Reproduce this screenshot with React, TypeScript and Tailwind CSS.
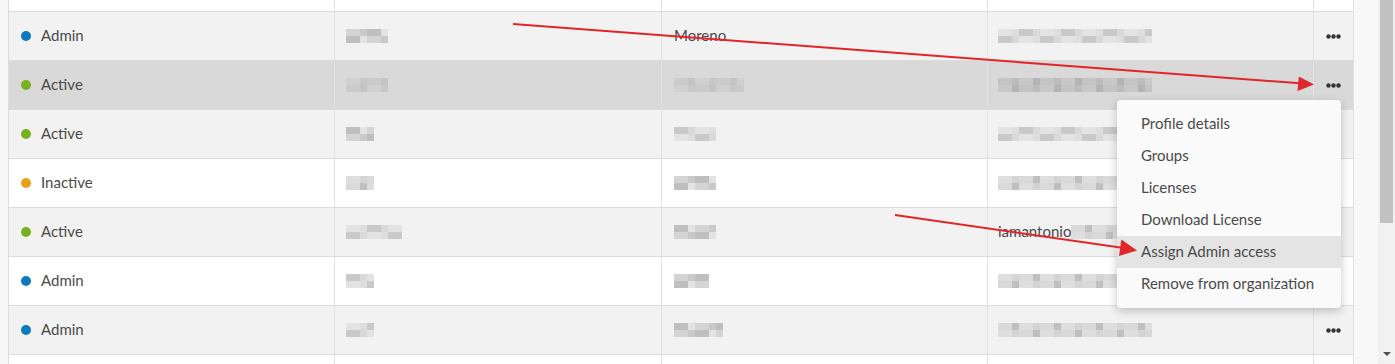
import React from "react";

type Cell = { kind: "text"; text: string } | { kind: "blur"; w: number; seed: number } | { kind: "mixed"; text: string; w: number; seed: number };

type Row = {
  status: "Admin" | "Active" | "Inactive";
  first: Cell;
  last: Cell;
  email: Cell;
  bg: string;
  hover?: boolean;
};

const SHADES = ["bg-[#c9c9c9]", "bg-[#d4d4d4]", "bg-[#dedede]", "bg-[#e3e3e3]", "bg-[#bfbfbf]", "bg-[#d9d9d9]"];
const DARK_SHADES = ["bg-[#bcbcbc]", "bg-[#c4c4c4]", "bg-[#cbcbcb]", "bg-[#b4b4b4]", "bg-[#c8c8c8]", "bg-[#d0d0d0]"];

const DOT: Record<Row["status"], string> = {
  Admin: "bg-[#0b7bbd]",
  Active: "bg-[#7aaf1f]",
  Inactive: "bg-[#e6a117]",
};

const rows: Row[] = [
  { status: "Admin", bg: "bg-[#f2f2f2]", first: { kind: "blur", w: 43, seed: 1 }, last: { kind: "text", text: "Moreno" }, email: { kind: "blur", w: 152, seed: 3 } },
  { status: "Active", bg: "bg-[#d9d9d9]", hover: true, first: { kind: "blur", w: 43, seed: 5 }, last: { kind: "blur", w: 70, seed: 2 }, email: { kind: "blur", w: 152, seed: 7 } },
  { status: "Active", bg: "bg-[#f2f2f2]", first: { kind: "blur", w: 28, seed: 4 }, last: { kind: "blur", w: 42, seed: 6 }, email: { kind: "blur", w: 140, seed: 9 } },
  { status: "Inactive", bg: "bg-white", first: { kind: "blur", w: 28, seed: 8 }, last: { kind: "blur", w: 42, seed: 1 }, email: { kind: "blur", w: 140, seed: 2 } },
  { status: "Active", bg: "bg-[#f2f2f2]", first: { kind: "blur", w: 56, seed: 3 }, last: { kind: "blur", w: 42, seed: 4 }, email: { kind: "mixed", text: "iamantonio", w: 60, seed: 5 } },
  { status: "Admin", bg: "bg-white", first: { kind: "blur", w: 28, seed: 6 }, last: { kind: "blur", w: 35, seed: 7 }, email: { kind: "blur", w: 140, seed: 8 } },
  { status: "Admin", bg: "bg-[#f2f2f2]", first: { kind: "blur", w: 28, seed: 9 }, last: { kind: "blur", w: 49, seed: 10 }, email: { kind: "blur", w: 155, seed: 11 } },
];

function Blur({ w, seed, dark }: { w: number; seed: number; dark?: boolean }) {
  const cols = Math.max(1, Math.round(w / 7));
  const shades = dark ? DARK_SHADES : SHADES;
  return (
    <div className="flex flex-col">
      {[0, 1].map((r) => (
        <div key={r} className="flex">
          {Array.from({ length: cols }).map((_, c) => (
            <div key={c} className={`h-[7px] w-[7px] ${shades[(c * 5 + r * 3 + seed * 7 + ((c * c) % 3)) % shades.length]}`} />
          ))}
        </div>
      ))}
    </div>
  );
}

function CellView({ cell, dark }: { cell: Cell; dark?: boolean }) {
  if (cell.kind === "text") return <span className="pb-[2px]">{cell.text}</span>;
  if (cell.kind === "blur") return <Blur w={cell.w} seed={cell.seed} dark={dark} />;
  return (
    <div className="flex items-center">
      <span className="pb-[2px]">{cell.text}</span>
      <Blur w={cell.w} seed={cell.seed} dark={dark} />
    </div>
  );
}

function Dots() {
  return (
    <svg width="15" height="5" viewBox="0 0 15 5">
      <circle cx="2.5" cy="2.5" r="2.2" fill="#333" />
      <circle cx="7.5" cy="2.5" r="2.2" fill="#333" />
      <circle cx="12.5" cy="2.5" r="2.2" fill="#333" />
    </svg>
  );
}

const menuItems = ["Profile details", "Groups", "Licenses", "Download License", "Assign Admin access", "Remove from organization"];

export default function App() {
  return (
    <div
      className="relative flex h-[364px] w-[1395px] overflow-hidden bg-[#f7f7f7] text-[15px] text-[#4a4a4a]"
      style={{ fontFamily: '"Source Sans Pro", Lato, "Noto Sans", sans-serif' }}
    >
      <div className="w-[8px] shrink-0" />
      <div className="w-[1346px] shrink-0 border-l border-[#dcdcdc]">
        <div className="grid h-[12px] grid-cols-[326px_327px_326px_326px_40px] border-b border-[#dcdcdc] bg-white">
          <div className="border-r border-[#e2e2e2]" />
          <div className="border-r border-[#e2e2e2]" />
          <div className="border-r border-[#e2e2e2]" />
          <div className="border-r border-[#e2e2e2]" />
          <div className="border-r border-[#e2e2e2]" />
        </div>
        {rows.map((row, i) => (
          <div key={i} className={`grid h-[49px] grid-cols-[326px_327px_326px_326px_40px] border-b border-[#dcdcdc] ${row.bg}`}>
            <div className="flex items-center gap-[10px] border-r border-[#e2e2e2] pl-[12px]">
              <span className={`h-[10px] w-[10px] rounded-full ${DOT[row.status]}`} />
              <span className="pb-[2px]">{row.status}</span>
            </div>
            <div className="flex items-center border-r border-[#e2e2e2] pl-[11px]">
              <CellView cell={row.first} dark={row.hover} />
            </div>
            <div className="flex items-center border-r border-[#e2e2e2] pl-[12px]">
              <CellView cell={row.last} dark={row.hover} />
            </div>
            <div className="flex items-center border-r border-[#e2e2e2] pl-[10px]">
              <CellView cell={row.email} dark={row.hover} />
            </div>
            <div className="flex items-center justify-center border-r border-[#e2e2e2]">
              <Dots />
            </div>
          </div>
        ))}
        <div className="grid h-[49px] grid-cols-[326px_327px_326px_326px_40px] bg-white">
          <div className="border-r border-[#e2e2e2]" />
          <div className="border-r border-[#e2e2e2]" />
          <div className="border-r border-[#e2e2e2]" />
          <div className="border-r border-[#e2e2e2]" />
          <div className="border-r border-[#e2e2e2]" />
        </div>
      </div>
      <div className="w-[24px] shrink-0 bg-[#f8f8f8]" />
      <div className="flex w-[17px] shrink-0 flex-col bg-[#f1f1f1]">
        <div className="mx-[2px] h-[223px] bg-[#c1c1c1]" />
        <div className="flex-1" />
        <div className="flex h-[17px] items-center justify-center pb-[4px]">
          <div className="h-0 w-0 border-x-[4px] border-t-[4px] border-x-transparent border-t-[#505050]" />
        </div>
      </div>

      <div className="absolute left-[1117px] top-[100px] w-[224px] rounded-[4px] bg-[#fafafa] py-[8px] shadow-[0_3px_10px_rgba(0,0,0,0.22)]">
        {menuItems.map((m) => (
          <div key={m} className={`flex h-[32px] items-center pb-[2px] pl-[24px] ${m === "Assign Admin access" ? "bg-[#e4e4e4]" : ""}`}>
            {m}
          </div>
        ))}
      </div>

      <svg className="pointer-events-none absolute left-0 top-0" width="1395" height="364" viewBox="0 0 1395 364">
        <line x1="513" y1="24" x2="1300" y2="83.3" stroke="#e0262a" strokeWidth="2" />
        <polygon points="1314,84.5 1297.5,91 1298.8,76.5" fill="#e0262a" />
        <line x1="895" y1="215" x2="1122" y2="247.8" stroke="#e0262a" strokeWidth="2" />
        <polygon points="1137,250.5 1119,256 1121.4,239.5" fill="#e0262a" />
      </svg>
    </div>
  );
}
